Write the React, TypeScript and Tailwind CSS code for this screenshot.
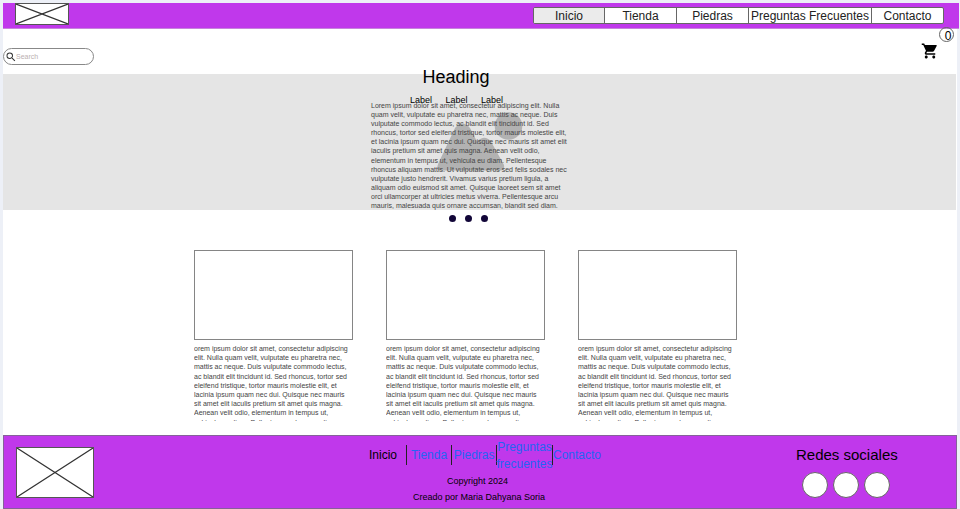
import React from "react";

const heroLines = [
  "Lorem ipsum dolor sit amet, consectetur adipiscing elit. Nulla",
  "quam velit, vulputate eu pharetra nec, mattis ac neque. Duis",
  "vulputate commodo lectus, ac blandit elit tincidunt id. Sed",
  "rhoncus, tortor sed eleifend tristique, tortor mauris molestie elit,",
  "et lacinia ipsum quam nec dui. Quisque nec mauris sit amet elit",
  "iaculis pretium sit amet quis magna. Aenean velit odio,",
  "elementum in tempus ut, vehicula eu diam. Pellentesque",
  "rhoncus aliquam mattis. Ut vulputate eros sed felis sodales nec",
  "vulputate justo hendrerit. Vivamus varius pretium ligula, a",
  "aliquam odio euismod sit amet. Quisque laoreet sem sit amet",
  "orci ullamcorper at ultricies metus viverra. Pellentesque arcu",
  "mauris, malesuada quis ornare accumsan, blandit sed diam.",
];

const cardLines = [
  "orem ipsum dolor sit amet, consectetur adipiscing",
  "elit. Nulla quam velit, vulputate eu pharetra nec,",
  "mattis ac neque. Duis vulputate commodo lectus,",
  "ac blandit elit tincidunt id. Sed rhoncus, tortor sed",
  "eleifend tristique, tortor mauris molestie elit, et",
  "lacinia ipsum quam nec dui. Quisque nec mauris",
  "sit amet elit iaculis pretium sit amet quis magna.",
  "Aenean velit odio, elementum in tempus ut,",
  "vehicula eu diam. Pellentesque rhoncus aliquam",
];

function Placeholder({ className }: { className: string }) {
  return (
    <svg className={className} viewBox="0 0 100 100" preserveAspectRatio="none">
      <rect width="100" height="100" fill="#fff" />
      <path
        d="M0 0L100 100M100 0L0 100"
        stroke="#333"
        strokeWidth="1.2"
        vectorEffect="non-scaling-stroke"
      />
    </svg>
  );
}

function Lines({ lines }: { lines: string[] }) {
  return (
    <>
      {lines.map((line) => (
        <p key={line} className="whitespace-nowrap">
          {line}
        </p>
      ))}
    </>
  );
}

function Header() {
  const item = "flex items-center justify-center border-r border-[#666]";
  return (
    <header className="flex h-[26px] w-[956px] justify-between border-b border-[#c784dc] bg-[#c038eb]">
      <Placeholder className="ml-3 h-[22px] w-[54px] border border-[#555]" />
      <nav className="mt-1 mr-[15px] flex h-[17px] w-[411px] overflow-hidden rounded-[2px] border border-[#666] bg-white text-[12px] text-[#222]">
        <span className={`${item} w-[71px] bg-[#ebebeb]`}>Inicio</span>
        <span className={`${item} w-[72px]`}>Tienda</span>
        <span className={`${item} w-[72px]`}>Piedras</span>
        <span className={`${item} w-[123px] whitespace-nowrap`}>Preguntas Frecuentes</span>
        <span className="flex flex-1 items-center justify-center">Contacto</span>
      </nav>
    </header>
  );
}

function Toolbar() {
  return (
    <div className="flex h-[45px] justify-between">
      <div className="mt-[19px] flex h-[17px] w-[91px] items-center rounded-full border border-[#888] pl-[2px]">
        <svg className="h-[10px] w-[10px]" viewBox="2 2 20 20" fill="#333">
          <path d="M15.5 14h-.79l-.28-.27A6.47 6.47 0 0 0 16 9.5 6.5 6.5 0 1 0 9.5 16c1.61 0 3.09-.59 4.23-1.57l.27.28v.79l5 4.99L20.49 19l-4.99-5zm-6 0C7.01 14 5 11.99 5 9.5S7.01 5 9.5 5 14 7.01 14 9.5 11.99 14 9.5 14z" />
        </svg>
        <span className="text-[7px] leading-none text-[#bbb0b0]">Search</span>
      </div>
      <div className="flex">
        <svg className="mt-[13px] h-[18px] w-[18px]" viewBox="0 0 24 24" fill="#000">
          <path d="M7 18c-1.1 0-1.99.9-1.99 2S5.9 22 7 22s2-.9 2-2-.9-2-2-2zM1 2v2h2l3.6 7.59-1.35 2.45c-.16.28-.25.61-.25.96 0 1.1.9 2 2 2h12v-2H7.42c-.14 0-.25-.11-.25-.25l.03-.12.9-1.63h7.45c.75 0 1.41-.41 1.75-1.03l3.58-6.49A1 1 0 0 0 20 4H5.21l-.94-2H1zm16 16c-1.1 0-1.99.9-1.99 2s.89 2 1.99 2 2-.9 2-2-.9-2-2-2z" />
        </svg>
        <span className="-mt-[2px] mr-[3px] flex h-[15px] w-[15px] items-center justify-center rounded-full border border-[#666] pt-[3px] pl-[3px] text-[12px] leading-none">
          0
        </span>
      </div>
    </div>
  );
}

function Hero() {
  return (
    <section className="relative h-[136px] w-[953px] bg-[#e5e5e5]">
      <svg className="absolute top-[35px] left-[430px] h-[64px] w-[96px]" viewBox="433 109 96 64" fill="#b2b2b2">
        <circle cx="508.5" cy="126" r="13.8" />
        <path d="M439 170.500Q436 169 438.500 163L455 128Q462.500 119 470 128L477 141.500Q484.500 134 491 141.500L504 165Q505 170 501 170.500Z" />
      </svg>
      <div className="absolute -top-[8px] left-[368px]">
        <h1 className="w-[170px] text-center text-[18px] leading-[22px] text-black">Heading</h1>
        <div className="mt-[6px] flex h-[12px] gap-[12.500px] pl-[39px] text-[9px] leading-[12px] text-black">
          <span className="w-[23px]">Label</span>
          <span className="w-[23px]">Label</span>
          <span className="w-[23px]">Label</span>
        </div>
        <div className="-mt-[5px] text-[7px] leading-[9.100px] text-[#444]">
          <Lines lines={heroLines} />
        </div>
      </div>
    </section>
  );
}

function Card() {
  return (
    <article className="w-[159px]">
      <div className="h-[90px] border border-[#858585] bg-white" />
      <div className="mt-[4px] h-[77px] overflow-hidden text-[7px] leading-[9.200px] text-[#444]">
        <Lines lines={cardLines} />
      </div>
    </article>
  );
}

function Footer() {
  const link = "flex items-center justify-center text-[#2464f4]";
  const bar = "h-[20px] w-[1px] shrink-0 bg-[#222]";
  return (
    <footer className="flex h-[74px] w-[954px] border border-[#85619a] bg-[#c038eb] text-black">
      <Placeholder className="mt-[11px] ml-[12px] h-[51px] w-[78px] border border-[#555]" />
      <div className="ml-[263px] flex w-[244px] flex-col">
        <nav className="mt-[2px] flex h-[34px] items-center text-[12px] leading-[17px]">
          <span className="w-[49px] pl-[12px]">Inicio</span>
          <span className={bar} />
          <span className={`${link} w-[45px]`}>Tienda</span>
          <span className={bar} />
          <span className={`${link} w-[44px]`}>Piedras</span>
          <span className={bar} />
          <span className={`${link} w-[55px] pt-[1px] text-center`}>Preguntas frecuentes</span>
          <span className={bar} />
          <span className={`${link} w-[48px]`}>Contacto</span>
        </nav>
        <p className="mt-[3px] pr-[3px] text-center text-[9px] leading-[12px]">Copyright 2024</p>
        <p className="mt-[4px] text-center text-[9px] leading-[12px]">Creado por Maria Dahyana Soria</p>
      </div>
      <div className="ml-[195px]">
        <h2 className="mt-[9px] whitespace-nowrap text-[15px] leading-[20px]">Redes sociales</h2>
        <div className="mt-[7px] ml-[6px] flex gap-[5px]">
          {[0, 1, 2].map((n) => (
            <span key={n} className="h-[26px] w-[26px] rounded-full border border-[#666] bg-white" />
          ))}
        </div>
      </div>
    </footer>
  );
}

export default function App() {
  return (
    <div className="h-[509px] w-[960px] overflow-hidden bg-[#edf0f7] pt-[3px] pl-[3px] font-['Liberation_Sans',Arial,sans-serif]">
      <Header />
      <main className="h-[406px] w-[954px] bg-white">
        <Toolbar />
        <Hero />
        <div className="flex h-[40px] gap-[9px] pt-[5px] pl-[446px]">
          {[0, 1, 2].map((n) => (
            <span key={n} className="h-[7px] w-[7px] rounded-full bg-[#120638]" />
          ))}
        </div>
        <div className="flex gap-[33px] pl-[191px]">
          <Card />
          <Card />
          <Card />
        </div>
      </main>
      <Footer />
    </div>
  );
}
